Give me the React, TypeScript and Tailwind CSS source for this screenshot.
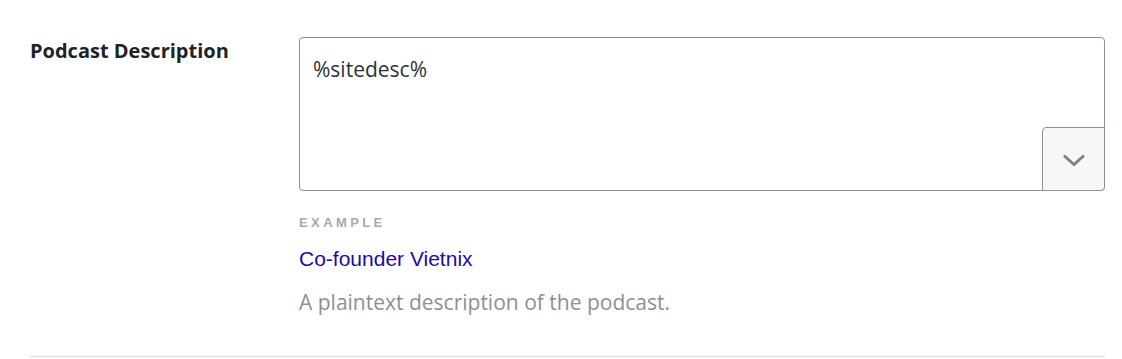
import React from "react";

export default function App() {
  return (
    <div className="w-[1122px] h-[359px] bg-white overflow-hidden">
      <div className="pl-[30px] pr-[17px]">
        <div className="flex pt-[37px] pb-[40px] border-b border-[#dcdcde]">
          <div className="w-[269px] shrink-0 pt-[1px]">
            <div className="font-['Open_Sans',sans-serif] font-bold text-[20px] leading-[26px] text-[#1d2327]">
              Podcast Description
            </div>
          </div>
          <div className="flex-1 flex flex-col">
            <div className="relative h-[154px] border border-[#8c8f94] rounded-[4px] bg-white">
              <div className="px-[13px] pt-[17px] font-['Open_Sans',sans-serif] text-[21px] leading-[28px] text-[#2c3338]">
                %sitedesc%
              </div>
              <div className="absolute right-[-1px] bottom-[-1px] w-[63px] h-[64px] border border-[#8c8f94] rounded-tl-[4px] rounded-br-[4px] bg-[#f6f7f7] flex items-center justify-center">
                <svg width="24" height="14" viewBox="0 0 24 14" fill="none" className="mt-[1px]">
                  <path d="M2 2.5 L12 11.5 L22 2.5" stroke="#7c7f84" strokeWidth="2.8" strokeLinecap="butt" strokeLinejoin="miter" />
                </svg>
              </div>
            </div>
            <div className="mt-[24px] font-['Liberation_Sans',sans-serif] font-bold text-[13px] leading-[16px] tracking-[3.4px] text-[#a7aaad]">
              EXAMPLE
            </div>
            <div className="mt-[16px] font-['Liberation_Sans',sans-serif] text-[21px] leading-[24px] text-[#1d0aa6]">
              Co-founder Vietnix
            </div>
            <div className="mt-[17px] font-['Open_Sans',sans-serif] text-[21px] leading-[28px] text-[#8c8f94]">
              A plaintext description of the podcast.
            </div>
          </div>
        </div>
      </div>
    </div>
  );
}
